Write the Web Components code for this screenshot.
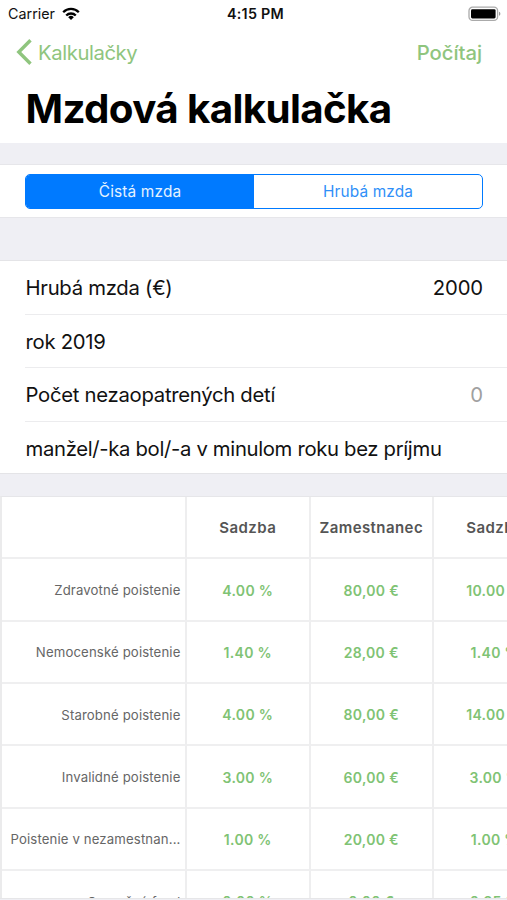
<!DOCTYPE html>
<html lang="sk">
<head>
<meta charset="utf-8">
<title>Mzdová kalkulačka</title>
<style>
html,body{margin:0;height:900px;overflow:hidden;background:#efeff4}
body{font-family:Inter,"Liberation Sans",sans-serif;color:#111}
</style>
</head>
<body>
<salary-app></salary-app>
<script>
const define = (name, html, setup) => customElements.define(name, class extends HTMLElement {
  constructor() {
    super();
    this.attachShadow({mode: 'open'}).innerHTML = html;
  }
  connectedCallback() { if (setup) setup.call(this, this.shadowRoot); }
});

define('status-bar', `<style>
:host{display:grid;grid-template-columns:1fr auto 1fr;align-items:center;height:28px;padding:0 6px 0 8px;color:#111;font-size:14.3px;line-height:28px}
.l{display:flex;align-items:center;gap:7px;letter-spacing:.02px}
.t{font-weight:600;letter-spacing:.3px;padding-left:2px}
.r{justify-self:end;display:flex}
svg{display:block}
.l svg{margin-top:-1px}
.r svg{margin-top:-1px}
</style>
<div class="l"><span>Carrier</span><svg width="18" height="14" viewBox="0 0 18 14"><g fill="none" stroke="#000" stroke-width="2.3"><path d="M1.2 5.2a11 11 0 0 1 15.6 0"/><path d="M4.2 8.5a6.8 6.8 0 0 1 9.6 0"/></g><path d="M9 13.1 6.2 10.2a4 4 0 0 1 5.6 0z"/></svg></div>
<span class="t">4:15 PM</span>
<div class="r"><svg width="33" height="16" viewBox="0 0 33 16"><rect x="1" y="1.2" width="28.6" height="13.2" rx="3.6" fill="#fff" stroke="#aaa" stroke-width="1.3"/><rect x="3" y="3.2" width="24.6" height="9.2" rx="1.4"/><path d="M31 5.8v4c1.8-.5 1.8-3.5 0-4z" fill="#999"/></svg></div>`);

define('nav-bar', `<style>
:host{display:flex;align-items:center;justify-content:space-between;height:48px;padding:0 25px 2px 16px;color:#8fc57e;font-size:20.3px}
.b{display:flex;align-items:center;gap:6px;letter-spacing:-.42px}
.a{font-weight:500;letter-spacing:-.05px}
</style>
<div class="b"><svg width="16" height="26" viewBox="0 0 16 26"><path d="M14.5 1.3 2.800 13l11.7 11.7" fill="none" stroke="#8fc57e" stroke-width="3.4"/></svg><slot name="back"></slot></div>
<div class="a"><slot name="action"></slot></div>`);

define('large-title', `<style>
:host{display:block;height:64px;padding-left:25.5px;font-size:40.3px;font-weight:700;line-height:62px;letter-spacing:-.64px;color:#000;white-space:nowrap}
</style><slot></slot>`);

define('segment-control', `<style>
:host{display:flex;height:33px;border:1.2px solid #007aff;border-radius:5px;overflow:hidden;font-size:15.4px;line-height:34px;text-align:center;letter-spacing:.15px}
::slotted(*){flex:1;color:#2f8ff8}
::slotted([selected]){background:#007aff;color:#e4f2ff}
</style><slot></slot>`);

define('form-row', `<style>
:host{display:block;padding-left:25px;background:#fff;font-size:20.3px}
div{display:flex;justify-content:space-between;align-items:center;height:52.7px;padding:0 24px 0 .5px;border-bottom:1.2px solid #ececee;white-space:nowrap}
:host([last]) div{border-color:transparent}
span{letter-spacing:-.28px}
:host([last]) span{letter-spacing:-.33px}
.v{letter-spacing:-.15px!important}
:host([dim]) .v{color:#a0a0a0}
</style><div><span><slot></slot></span><span class="v"><slot name="value"></slot></span></div>`);

define('rate-table', `<style>
:host{display:grid;grid-template-columns:185px 123.5px 123.5px 123.5px;grid-auto-rows:62.35px;width:560px;box-sizing:border-box;border-left:2px solid #ebebec;border-top:1px solid #e6e6e9;background:#fff}
.c{box-sizing:border-box;border-right:2px solid #eeeeef;border-bottom:2px solid #efeff0;display:flex;align-items:center;justify-content:center;padding-top:1px;color:#7fc374;font-size:14px;font-weight:600;letter-spacing:.3px;white-space:nowrap}
.h{color:#555;font-size:15px;letter-spacing:.43px}
.n{justify-content:flex-end;padding-right:4.5px;color:#666;font-size:13.2px;font-weight:400;letter-spacing:.13px}
</style>`, function (root) {
  [['', 'Sadzba', 'Zamestnanec', 'Sadzba'],
   ['Zdravotné poistenie', '4.00 %', '80,00 €', '10.00 %'],
   ['Nemocenské poistenie', '1.40 %', '28,00 €', '1.40 %'],
   ['Starobné poistenie', '4.00 %', '80,00 €', '14.00 %'],
   ['Invalidné poistenie', '3.00 %', '60,00 €', '3.00 %'],
   ['Poistenie v nezamestnan...', '1.00 %', '20,00 €', '1.00 %'],
   ['Garančný fond', '0.00 %', '0,00 €', '0.25 %']
  ].forEach((row, y) => row.forEach((text, x) => {
    const cell = document.createElement('div');
    cell.className = 'c' + (y === 0 ? ' h' : x === 0 ? ' n' : '');
    cell.textContent = text;
    root.append(cell);
  }));
});

define('salary-app', `<style>
:host{display:flex;flex-direction:column;width:507px;height:900px;overflow:hidden;background:#efeff4}
header{background:#fff;height:142.5px;flex:none}
.seg{margin-top:21.5px;padding:9px 24px 7.5px 25px;background:#fff;border-top:1px solid #e6e6ea;border-bottom:1px solid #e6e6ea;flex:none}
.form{margin-top:42.5px;height:212px;overflow:hidden;border-top:1px solid #e4e4e7;border-bottom:1px solid #e4e4e7;background:#fff;flex:none}
.table{margin-top:22px;height:402px;overflow:hidden;border-bottom:1px solid #e6e6e8;flex:none}
</style>
<header><status-bar></status-bar>
<nav-bar><span slot="back">Kalkulačky</span><span slot="action">Počítaj</span></nav-bar>
<large-title>Mzdová kalkulačka</large-title></header>
<div class="seg"><segment-control><span selected>Čistá mzda</span><span>Hrubá mzda</span></segment-control></div>
<div class="form">
<form-row>Hrubá mzda (€)<span slot="value">2000</span></form-row>
<form-row>rok 2019</form-row>
<form-row dim>Počet nezaopatrených detí<span slot="value">0</span></form-row>
<form-row last>manžel/-ka bol/-a v minulom roku bez príjmu</form-row>
</div>
<div class="table"><rate-table></rate-table></div>`);
</script>
</body>
</html>
